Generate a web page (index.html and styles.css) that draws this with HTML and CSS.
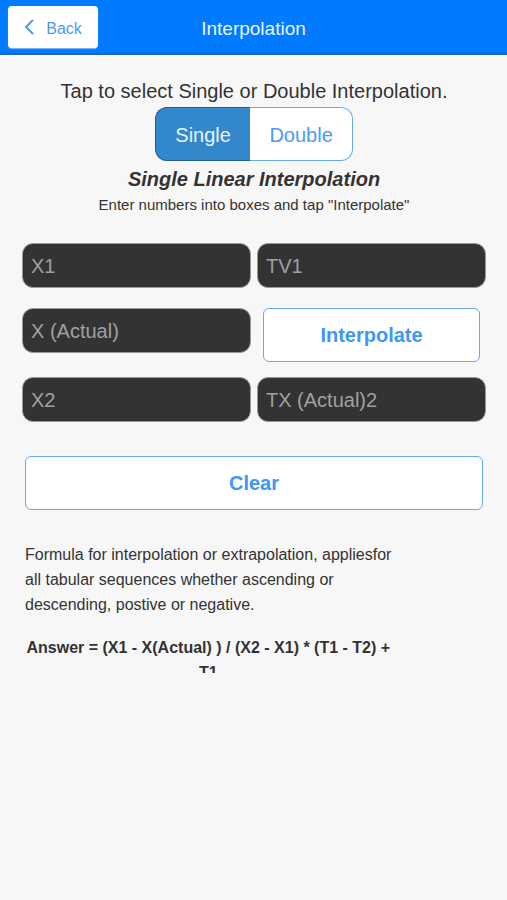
FILE: index.html
```html
<!DOCTYPE html>
<html lang="en">
<head>
    <meta charset="UTF-8">
    <meta name="viewport" content="width=device-width, initial-scale=1.0">
    <title>Interpolation</title>
    <link rel="stylesheet" href="styles.css">
</head>
<body>
    <header class="header">
        <button type="button" class="back">
            <svg class="back-icon" viewBox="0 0 10 16" width="10" height="16" aria-hidden="true">
                <path d="M8.5 1.5 L2 8 L8.5 14.5" fill="none" stroke="currentColor" stroke-width="2" stroke-linecap="round"/>
            </svg>
            <span>Back</span>
        </button>
        <h1 class="title">Interpolation</h1>
    </header>
    <main class="content">
        <p class="prompt">Tap to select Single or Double Interpolation.</p>
        <div class="toggle">
            <input type="radio" name="mode" id="single" checked>
            <label for="single">Single</label>
            <input type="radio" name="mode" id="double">
            <label for="double">Double</label>
        </div>
        <h2 class="subtitle">Single Linear Interpolation</h2>
        <p class="hint">Enter numbers into boxes and tap "Interpolate"</p>
        <form class="form">
            <div class="row">
                <input type="text" class="field" placeholder="X1" aria-label="X1">
                <input type="text" class="field" placeholder="TV1" aria-label="TV1">
            </div>
            <div class="row">
                <input type="text" class="field" placeholder="X (Actual)" aria-label="X (Actual)">
                <button type="button" class="button">Interpolate</button>
            </div>
            <div class="row">
                <input type="text" class="field" placeholder="X2" aria-label="X2">
                <input type="text" class="field" placeholder="TX (Actual)2" aria-label="TX (Actual)2">
            </div>
            <button type="reset" class="button clear">Clear</button>
        </form>
        <section class="formula">
            <p>Formula for interpolation or extrapolation, appliesfor all tabular sequences whether ascending or descending, postive or negative.</p>
            <p class="answer">Answer = (X1 - X(Actual) ) / (X2 - X1) * (T1 - T2) + T1</p>
        </section>
    </main>
</body>
</html>
```

FILE: styles.css
```css
* {
    box-sizing: border-box;
}

body {
    margin: 0;
    font-family: "Liberation Sans", Arial, sans-serif;
    color: #333;
    background-color: #f7f7f7;
}

h1, h2, p {
    margin: 0;
}

button, input {
    font-family: inherit;
}

.header {
    display: grid;
    grid-template-columns: 1fr auto 1fr;
    align-items: center;
    height: 55px;
    padding: 0 8px;
    background-color: #007aff;
    border-bottom: 2px solid #1f66b5;
}

.back {
    display: flex;
    align-items: center;
    justify-content: center;
    gap: 12px;
    width: 90px;
    height: 42px;
    padding: 0;
    font-size: 16px;
    color: #4a9bf0;
    background-color: #fff;
    border: none;
    border-radius: 4px;
    box-shadow: 0 1px 1px #80b8f5;
}

.back span {
    padding-top: 4px;
}

.title {
    padding-top: 4px;
    font-size: 19px;
    font-weight: normal;
    color: #e9f4ff;
}

.content {
    padding: 24px 21px 24px 22px;
}

.prompt {
    font-size: 20px;
    line-height: 24px;
    text-align: center;
}

.toggle {
    display: flex;
    width: 198px;
    margin: 4px auto 0;
    border-radius: 12px;
}

.toggle input {
    position: absolute;
    opacity: 0;
}

.toggle label {
    flex: 1 1 50%;
    height: 54px;
    font-size: 20px;
    line-height: 54px;
    text-align: center;
    color: #4a9bf7;
    background-color: #fff;
    border: 1px solid #65aaf0;
}

.toggle label:first-of-type {
    border-right: none;
    border-radius: 12px 0 0 12px;
}

.toggle label:last-of-type {
    flex-basis: 54%;
    border-left: none;
    border-radius: 0 12px 12px 0;
}

.toggle input:checked + label {
    color: #e9f4ff;
    background-color: #3388cc;
    border-color: #1f5f96;
}

.subtitle {
    margin-top: 6px;
    font-size: 20px;
    font-style: italic;
    line-height: 24px;
    text-align: center;
}

.hint {
    margin-top: 4px;
    font-size: 15px;
    line-height: 20px;
    text-align: center;
}

.form {
    margin-top: 28px;
}

.row {
    display: grid;
    grid-template-columns: 1fr 1fr;
    align-items: start;
    gap: 6px;
    margin-bottom: 20px;
}

.row:nth-child(2) {
    margin-bottom: 15px;
}

.field {
    width: 100%;
    height: 45px;
    padding: 2px 8px 0;
    font-size: 20px;
    color: #fff;
    background-color: #333;
    border: 1px solid #999;
    border-radius: 11px;
}

.field::placeholder {
    color: #a0a0a0;
}

.button {
    height: 54px;
    margin: 0 6px;
    padding-top: 2px;
    font-size: 20px;
    font-weight: bold;
    color: #3f97f6;
    background-color: #fff;
    border: 1px solid #65aaf0;
    border-radius: 6px;
}

.clear {
    display: block;
    width: calc(100% - 6px);
    margin: 34px 3px 0;
}

/* fixed-height box, a longer formula is cut off */
.formula {
    width: 79%;
    height: 131px;
    margin: 32px 3px 0;
    overflow: hidden;
    font-size: 16px;
    line-height: 25px;
}

.answer {
    margin-top: 18px;
    font-weight: bold;
    text-align: center;
}
```
